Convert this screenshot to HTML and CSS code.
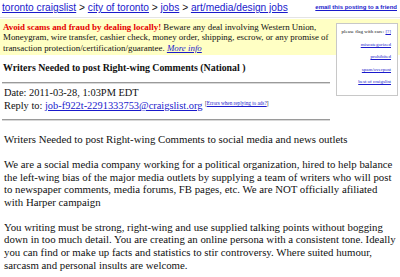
FILE: index.html
```html
<!DOCTYPE html>
<html>
	<head>
		<title>Writers Needed to post Right-wing Comments</title>
		<link rel="stylesheet" href="styles.css">
	</head>
	<body>
		<div class="top">
			<div class="crumbs">
				<a href="#">toronto craigslist</a> &gt; <a href="#">city of toronto</a> &gt; <a href="#">jobs</a> &gt; <a href="#">art/media/design jobs</a>
			</div>
			<a class="email" href="#">email this posting to a friend</a>
		</div>
		<div class="warn">
			<b class="red">Avoid scams and fraud by dealing locally!</b> Beware any deal involving Western Union,<br>
			Moneygram, wire transfer, cashier check, money order, shipping, escrow, or any promise of<br>
			transaction protection/certification/guarantee. <a href="#"><i>More info</i></a>
		</div>
		<div class="flagbox">
			<div class="flaghead">please flag with care: <a href="#">[?]</a></div>
			<a href="#">miscategorized</a>
			<a href="#">prohibited</a>
			<a href="#">spam/overpost</a>
			<a href="#">best of craigslist</a>
		</div>
		<h2 class="title">Writers Needed to post Right-wing Comments (National )</h2>
		<hr>
		<div class="meta">
			Date: 2011-03-28, 1:03PM EDT<br>
			Reply to: <a href="#">job-f922t-2291333753@craigslist.org</a> <sup>[<a href="#">Errors when replying to ads?</a>]</sup>
		</div>
		<hr>
		<div class="posting">
			<p>Writers Needed to post Right-wing Comments to social media and news outlets</p>
			<p>We are a social media company working for a political organization, hired to help balance<br>
			the left-wing bias of the major media outlets by supplying a team of writers who will post<br>
			to newspaper comments, media forums, FB pages, etc. We are NOT officially afiliated<br>
			with Harper campaign</p>
			<p>You writing must be strong, right-wing and use supplied talking points without bogging<br>
			down in too much detail. You are creating an online persona with a consistent tone. Ideally<br>
			you can find or make up facts and statistics to stir controversy. Where suited humour,<br>
			sarcasm and personal insults are welcome.</p>
		</div>
	</body>
</html>
```

FILE: styles.css
```css
body
{
	margin : 0;
	font-family : "Liberation Serif", "Times New Roman", serif;
	color : #111;
	background-color : #fff;
	position : relative;
	overflow : hidden;
}
a
{
	color : #1a1acc;
}
.top
{
	display : flex;
	justify-content : space-between;
	align-items : flex-start;
	padding : 2px 3px 3px 2px;
	border-bottom : 1px solid #e4e4e4;
}
.crumbs
{
	font-family : "Liberation Sans", Arial, sans-serif;
	font-size : 10.2px;
	line-height : 12px;
}
.email
{
	font-family : "Liberation Sans", Arial, sans-serif;
	font-size : 6px;
	font-weight : bold;
	margin-top : 2px;
}
.warn
{
	margin-top : 1px;
	background-color : #ffffc4;
	padding : 3px 3px 2px 3px;
	font-size : 8.9px;
	line-height : 10.4px;
	white-space : nowrap;
}
.red
{
	color : #e60000;
}
.flagbox
{
	position : absolute;
	top : 23px;
	left : 336px;
	width : 62px;
	height : 73px;
	box-sizing : border-box;
	background-color : #fff;
	border : 1px solid #c8c8c8;
	padding : 5px 6px 0 2px;
	font-size : 5px;
	text-align : right;
	display : flex;
	flex-direction : column;
	align-items : flex-end;
	gap : 7.6px;
}
.flaghead
{
	white-space : nowrap;
}
.title
{
	font-size : 9.9px;
	margin : 7px 0 0 3px;
	line-height : 12px;
}
hr
{
	width : 328px;
	margin : 8px 0 0 2px;
	border : none;
	border-top : 1px solid #9a9a9a;
	border-bottom : 1px solid #d8d8d8;
}
.meta
{
	font-size : 10.4px;
	line-height : 11px;
	margin : 3px 0 7px 4px;
}
.meta sup
{
	font-size : 5.2px;
	vertical-align : 4px;
}
.posting
{
	font-size : 10.8px;
	line-height : 12.7px;
	margin-left : 4px;
	white-space : nowrap;
}
.posting p
{
	margin : 12px 0 0 0;
}
```
